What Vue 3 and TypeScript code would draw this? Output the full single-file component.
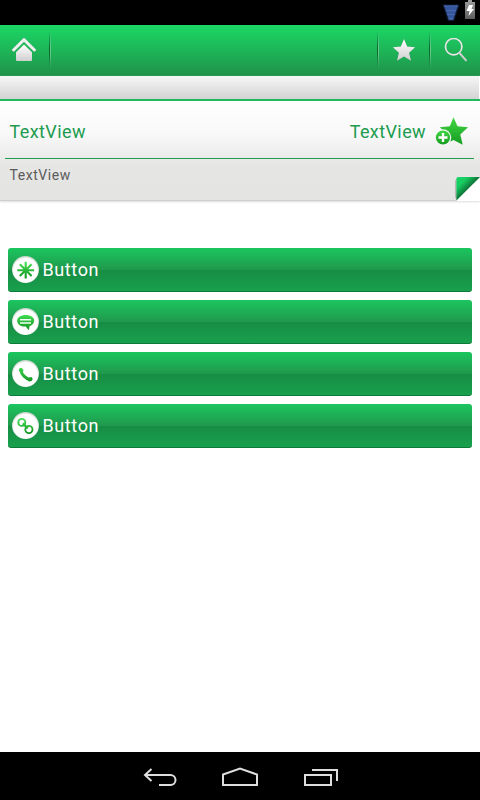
<script setup lang="ts">
type IconName = 'asterisk' | 'chat' | 'phone' | 'link'

interface Action {
  icon: IconName
  label: string
}

const actions: Action[] = [
  { icon: 'asterisk', label: 'Button' },
  { icon: 'chat', label: 'Button' },
  { icon: 'phone', label: 'Button' },
  { icon: 'link', label: 'Button' },
]
</script>

<template>
  <div class="screen">
    <svg class="defs" width="0" height="0">
      <defs>
        <linearGradient id="silver" x1="0" y1="0" x2="0" y2="1">
          <stop offset="0" stop-color="#fff" />
          <stop offset="1" stop-color="#cfcfcf" />
        </linearGradient>
        <linearGradient id="leaf" x1="0" y1="0" x2="0" y2="1">
          <stop offset="0" stop-color="#43d843" />
          <stop offset="1" stop-color="#159a22" />
        </linearGradient>
        <linearGradient id="glyph" gradientUnits="userSpaceOnUse" x1="0" y1="6" x2="0" y2="22">
          <stop offset="0" stop-color="#45e055" />
          <stop offset="1" stop-color="#129420" />
        </linearGradient>
        <linearGradient id="fold" gradientUnits="userSpaceOnUse" x1="2" y1="2" x2="14" y2="14">
          <stop offset="0" stop-color="#18d565" />
          <stop offset="0.45" stop-color="#17cc60" />
          <stop offset="1" stop-color="#0c6b33" />
        </linearGradient>
        <linearGradient id="battery" x1="0" y1="0" x2="0" y2="1">
          <stop offset="0" stop-color="#a0a0a0" />
          <stop offset="1" stop-color="#5c5c5c" />
        </linearGradient>
        <radialGradient id="disc" cx=".5" cy=".53" r=".51">
          <stop offset=".86" stop-color="#fff" />
          <stop offset="1" stop-color="#c9d6cc" />
        </radialGradient>
      </defs>
    </svg>

    <div class="status">
      <svg class="signal" width="20" height="22" viewBox="0 0 20 22">
        <path d="M1.500 4.500h17l-5.500 16.500h-6z" fill="#2d4a8c" opacity=".4" />
        <path d="M3 5.500h14l-5 14.500h-4z" fill="#36569c" />
        <path d="M3 6h14M5 10.500h10M6 14.500h8M7.500 18.500h5" stroke="#4768b0" />
      </svg>
      <svg class="power" width="10" height="19" viewBox="0 0 10 19">
        <path d="M3 0h4v2h3v17H0V2h3z" fill="url(#battery)" />
        <path d="M4 5h4L6.500 9H9L3.500 16l1-5H1.500z" fill="#fff" />
      </svg>
    </div>

    <header class="toolbar">
      <div class="tool home">
        <svg width="24" height="24" viewBox="0 0 24 24" fill="none">
          <path d="m12 6.500 8 7.800V22q0 1-1 1H5q-1 0-1-1v-7.700z" fill="url(#silver)" />
          <path d="M1.600 12 12 1.600 22.400 12" stroke="#f0f0f0" stroke-width="3" stroke-linecap="round" stroke-linejoin="round" />
        </svg>
      </div>
      <i class="rule"></i>
      <span class="spacer"></span>
      <i class="rule"></i>
      <div class="tool">
        <svg width="24" height="24" viewBox="0 0 24 24">
          <path d="m12 1 3.200 7.500 8 .7-6.100 5.500 1.900 8-7-4.100-7 4.100 1.900-8L.8 9.200l8-.7z" fill="url(#silver)" />
        </svg>
      </div>
      <i class="rule"></i>
      <div class="tool">
        <svg width="24" height="24" viewBox="0 0 24 24" fill="none">
          <circle cx="9.700" cy="8.700" r="8.200" stroke="#e5e9e6" stroke-width="1.700" />
          <path d="m15.500 15 6.500 7.300" stroke="#ccd2cd" stroke-width="2" stroke-linecap="round" />
        </svg>
      </div>
    </header>

    <div class="strip"></div>

    <section class="card">
      <div class="title-row">
        <span class="title">TextView</span>
        <span class="title value">TextView</span>
        <svg class="favorite" width="34" height="30" viewBox="0 0 34 30">
          <path d="m19.500 1.200 4 9 10.500 1-7.700 7.200 2.400 10.300-9.200-4.800-8.300 4 2.300-9.500-7.700-7.200 10-1z" fill="url(#leaf)" />
          <circle cx="9" cy="21.500" r="8.300" fill="#f5f5f4" />
          <circle cx="9" cy="21.500" r="7.100" fill="url(#leaf)" />
          <path d="M9 17v9M4.500 21.500h9" stroke="#fff" stroke-width="2.400" />
        </svg>
      </div>
      <div class="subtitle">TextView</div>
      <svg class="corner" width="26" height="25" viewBox="0 0 26 25">
        <path d="M26 1v24H2z" fill="#fff" />
        <path d="M1 5v16L2.500 24V2z" fill="#999" opacity=".6" />
        <path d="M2.400 24.500V3q0-2 2-2H26z" fill="url(#fold)" />
      </svg>
    </section>

    <main class="actions">
      <button v-for="action in actions" :key="action.icon" class="action" type="button">
        <svg class="badge" width="28" height="28" viewBox="0 0 28 28" fill="none">
          <circle cx="13.500" cy="13.500" r="13.500" fill="url(#disc)" />
          <g v-if="action.icon === 'asterisk'" stroke="url(#glyph)" stroke-width="2.100">
            <path d="M13.700 5.800 13.701 22.600M5.300 14.200 22.100 14.201M7.800 8.300l11.800 11.800M19.600 8.300 7.800 20.100" />
          </g>
          <g v-else-if="action.icon === 'chat'">
            <path d="M13.700 7c4.800 0 8.500 2.200 8.500 5.800 0 2.400-1.800 4.500-4.700 5.400l-.6 4.100-3.200-3.700c-5 .2-8.500-2.200-8.500-5.800C5.200 9.200 8.900 7 13.700 7z" fill="url(#glyph)" />
            <path d="M8 11.800h11M8 14.900h11" stroke="#f2fff3" stroke-width="1.500" />
          </g>
          <g v-else-if="action.icon === 'phone'" stroke="url(#glyph)" stroke-linecap="round">
            <path d="M9 10.300c.3 4 4.600 8.400 9.300 9.300" stroke-width="3" />
            <path d="m8.800 9.900.6.600M17.600 19.500l1-.4" stroke-width="4" />
          </g>
          <g v-else stroke="url(#glyph)" stroke-width="1.900">
            <circle cx="9.800" cy="10.400" r="3.500" />
            <circle cx="16.900" cy="17.500" r="3.600" />
            <path d="m10.800 11.400 5 5" stroke-width="2.200" />
          </g>
        </svg>
        <span>{{ action.label }}</span>
      </button>
    </main>

    <nav class="navbar">
      <svg width="36" height="20" viewBox="0 0 36 20">
        <path d="M3 8h25.500a5 5 0 0 1 0 10H17M9.500 2 3 8l6.500 6" />
      </svg>
      <svg width="38" height="20" viewBox="0 0 38 20">
        <path d="M2 18V7.500L19 1.500l17 6V18z" />
      </svg>
      <svg width="36" height="20" viewBox="0 0 36 20">
        <path d="M2 8h26v10H2zM9 3h25v11" />
      </svg>
    </nav>
  </div>
</template>

<style>
body {
  margin: 0;
}
</style>

<style scoped>
.screen {
  display: flex;
  flex-direction: column;
  width: 480px;
  height: 800px;
  overflow: hidden;
  background: #fff;
  font-family: Roboto, sans-serif;
}
.defs {
  position: absolute;
}
svg {
  display: block;
  flex: none;
}
.status {
  display: flex;
  justify-content: flex-end;
  gap: 4px;
  height: 25px;
  padding-right: 5px;
  background: #000;
}
.signal {
  filter: blur(0.4px);
}
.toolbar {
  display: flex;
  height: 51px;
  background: linear-gradient(#1bd866, #20934a);
  box-sizing: border-box;
  border-bottom: 1px solid #249b50;
}
.tool {
  display: flex;
  align-items: center;
  justify-content: center;
  width: 50px;
  filter: drop-shadow(0 0 0.6px #2a8a4e);
}
.tool.home {
  width: 48px;
  margin-right: 1px;
}
.toolbar .tool:last-child {
  width: 49px;
  padding-left: 1px;
  box-sizing: border-box;
}
.rule {
  width: 2px;
  height: 38px;
  margin-top: 6px;
  background:
    linear-gradient(transparent, #09602c 50%, transparent) 0 0 / 1px 100% no-repeat,
    linear-gradient(transparent, #70c890 50%, transparent) 1px 0 / 1px 100% no-repeat;
}
.spacer {
  flex: 1;
}
.strip {
  height: 23px;
  margin-right: 1px;
  background: linear-gradient(#f7f7f7, #d2d3d2);
}
.card {
  position: relative;
  height: 102px;
  box-sizing: border-box;
  padding: 0 6px 0 5px;
  border-top: 2px solid #20b95e;
  border-bottom: 1px solid #cececd;
  background: linear-gradient(#fff, #f8f8f8 34%, #e6e6e5 65%, #e3e3e2);
  box-shadow: 0 1px 2px #ddd;
}
.title-row {
  display: flex;
  align-items: center;
  height: 58px;
  box-sizing: border-box;
  padding: 2px 6px 0 4.500px;
  border-bottom: 1px solid #219d50;
}
.title {
  color: #209c4f;
  font-size: 18px;
  line-height: 22px;
  letter-spacing: 0.4px;
  padding-top: 2px;
}
.value {
  margin-left: auto;
  margin-right: 8px;
}
.subtitle {
  padding: 6px 0 0 4.500px;
  color: #5b5b5b;
  font-size: 14px;
  line-height: 20px;
  letter-spacing: 0.55px;
}
.corner {
  position: absolute;
  right: 0;
  bottom: -1px;
}
.actions {
  display: flex;
  flex: 1;
  flex-direction: column;
  gap: 8px;
  padding: 47px 8px 0;
}
.action {
  display: flex;
  align-items: center;
  gap: 2.500px;
  height: 44px;
  box-sizing: border-box;
  padding: 0 0 0 4px;
  border: 0;
  border-bottom: 1px solid #0d7a3a;
  border-radius: 3px;
  background: linear-gradient(#1bc65f, #20984c 51%, #168d43 51%, #19a04e);
  color: #fff;
  font: 18px Roboto, sans-serif;
  letter-spacing: 0.6px;
}
.navbar {
  display: flex;
  align-items: center;
  justify-content: center;
  gap: 43px;
  height: 48px;
  padding-top: 2px;
  box-sizing: border-box;
  background: #000;
}
.navbar svg:last-child {
  margin-left: 1px;
}
.navbar path {
  fill: none;
  stroke: #dedede;
  stroke-width: 2;
}
</style>
